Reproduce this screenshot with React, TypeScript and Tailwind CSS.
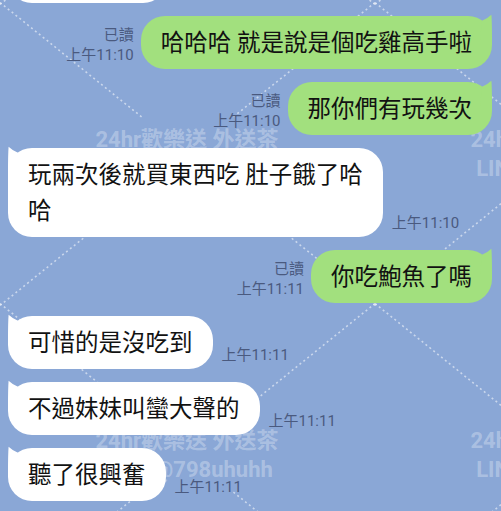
import React from "react";

const SLOPE = 0.808;
const HX = 187.5;
const HY = 151.5;
const GAP = 44;

function buildSegments() {
  const segs: { x1: number; y1: number; x2: number; y2: number }[] = [];
  for (let i = -1; i <= 2; i++) {
    for (let j = -1; j <= 2; j++) {
      const cx = 187.5 + 375 * i;
      const cy = 154 + 301 * j;
      const dy = GAP * SLOPE;
      segs.push({ x1: cx - HX, y1: cy - HY, x2: cx - GAP, y2: cy - dy });
      segs.push({ x1: cx + HX, y1: cy + HY, x2: cx + GAP, y2: cy + dy });
      segs.push({ x1: cx + HX, y1: cy - HY, x2: cx + GAP, y2: cy - dy });
      segs.push({ x1: cx - HX, y1: cy + HY, x2: cx - GAP, y2: cy + dy });
    }
  }
  return segs;
}

function Background() {
  const segs = buildSegments();
  return (
    <div className="absolute inset-0">
      <svg className="absolute inset-0 h-full w-full" width="501" height="511">
        {segs.map((s, k) => (
          <line
            key={k}
            x1={s.x1}
            y1={s.y1}
            x2={s.x2}
            y2={s.y2}
            stroke="#ffffff"
            strokeOpacity="0.55"
            strokeWidth="1.6"
            strokeDasharray="2 3"
          />
        ))}
      </svg>
      <Watermark className="absolute left-[187px] top-[154px]" />
      <Watermark className="absolute left-[562px] top-[154px]" />
      <Watermark className="absolute left-[187px] top-[455px]" />
      <Watermark className="absolute left-[562px] top-[455px]" />
    </div>
  );
}

function Watermark({ className }: { className: string }) {
  return (
    <div className={className}>
      <div className="-translate-x-1/2 -translate-y-1/2 whitespace-nowrap text-center text-[22px] font-bold leading-[29px] text-white/30">
        <div>24hr歡樂送 外送茶</div>
        <div>LINE:@798uhuhh</div>
      </div>
    </div>
  );
}

function TailRight({ color }: { color: string }) {
  return (
    <svg className="absolute right-0 top-0 h-[24px] w-[24px] overflow-visible" viewBox="0 0 24 24">
      <path d="M14 4.8 Q19 3 23.4 -1.2 Q24 6 24 24 L12 24 Z" fill={color} />
    </svg>
  );
}

function TailLeft({ color }: { color: string }) {
  return (
    <svg className="absolute left-0 top-0 h-[24px] w-[24px] overflow-visible" viewBox="0 0 24 24">
      <path d="M10 4.8 Q5 3 0.6 -1.2 Q0 6 0 24 L12 24 Z" fill={color} />
    </svg>
  );
}

function Left({ children, time }: { children: React.ReactNode; time: string }) {
  return (
    <div className="flex items-end gap-[9px] pl-[8px]">
      <div className="relative rounded-[24px] bg-white px-[20px] py-[8.5px] text-[23.5px] leading-[36px] text-[#121212]">
        <TailLeft color="#ffffff" />
        <span className="relative">{children}</span>
      </div>
      <span className="mb-[4px] whitespace-nowrap text-[15px] leading-[20px] text-[#4a5a7f]">{time}</span>
    </div>
  );
}

function Right({ children, time }: { children: React.ReactNode; time: string }) {
  return (
    <div className="flex items-end justify-end gap-[7px] pr-[9px]">
      <div className="mb-[4px] flex flex-col items-end text-[15px] leading-[20px] text-[#4a5a7f]">
        <span>已讀</span>
        <span className="whitespace-nowrap">{time}</span>
      </div>
      <div className="relative rounded-[24px] bg-[#a2e07e] px-[20px] py-[8.5px] text-[23.5px] leading-[36px] text-[#121212]">
        <TailRight color="#a2e07e" />
        <span className="relative whitespace-nowrap">{children}</span>
      </div>
    </div>
  );
}

export default function App() {
  return (
    <div className="relative h-[511px] w-full overflow-hidden bg-[#8aa7d6] font-['Roboto','Noto_Sans_CJK_TC',sans-serif]">
      <Background />
      <div className="relative -mt-[50px] flex flex-col gap-[13px]">
        <div className="flex pl-[8px]">
          <div className="h-[53px] w-[159px] rounded-[24px] bg-white" />
        </div>
        <Right time="上午11:10">哈哈哈 就是說是個吃雞高手啦</Right>
        <Right time="上午11:10">那你們有玩幾次</Right>
        <Left time="上午11:10">
          玩兩次後就買東西吃 肚子餓了哈
          <br />哈
        </Left>
        <Right time="上午11:11">你吃鮑魚了嗎</Right>
        <Left time="上午11:11">可惜的是沒吃到</Left>
        <Left time="上午11:11">不過妹妹叫蠻大聲的</Left>
        <Left time="上午11:11">聽了很興奮</Left>
      </div>
    </div>
  );
}
